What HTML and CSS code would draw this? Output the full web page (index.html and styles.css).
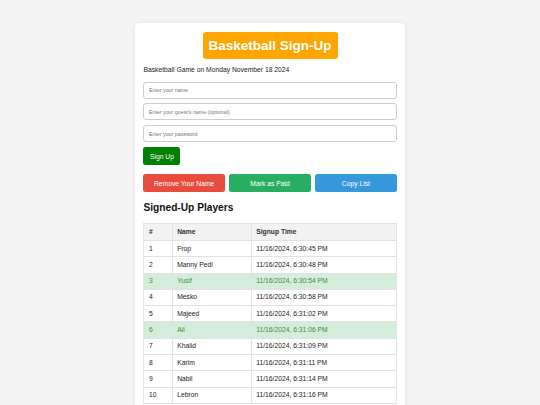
FILE: index.html
```html
<!DOCTYPE html>
<html lang="en">
<head>
<meta charset="utf-8">
<title>Basketball Sign-Up</title>
<link rel="stylesheet" href="styles.css">
</head>
<body>
<div class="card">
  <div class="title-wrap"><h1 class="title">Basketball Sign-Up</h1></div>
  <p class="subtitle">Basketball Game on Monday November 18 2024</p>
  <form class="form">
    <input class="field" type="text" placeholder="Enter your name">
    <input class="field" type="text" placeholder="Enter your guest's name (optional)">
    <input class="field" type="password" placeholder="Enter your password">
    <button type="button" class="btn btn-signup">Sign Up</button>
  </form>
  <div class="actions">
    <button type="button" class="btn btn-red">Remove Your Name</button>
    <button type="button" class="btn btn-green">Mark as Paid</button>
    <button type="button" class="btn btn-blue">Copy List</button>
  </div>
  <h2 class="heading">Signed-Up Players</h2>
  <table class="players">
    <thead>
      <tr><th class="c-num">#</th><th class="c-name">Name</th><th>Signup Time</th></tr>
    </thead>
    <tbody>
      <tr><td>1</td><td>Frop</td><td>11/16/2024, 6:30:45 PM</td></tr>
      <tr><td>2</td><td>Manny Pedi</td><td>11/16/2024, 6:30:48 PM</td></tr>
      <tr class="paid"><td>3</td><td>Yusif</td><td>11/16/2024, 6:30:54 PM</td></tr>
      <tr><td>4</td><td>Mesko</td><td>11/16/2024, 6:30:58 PM</td></tr>
      <tr><td>5</td><td>Majeed</td><td>11/16/2024, 6:31:02 PM</td></tr>
      <tr class="paid"><td>6</td><td>Ali</td><td>11/16/2024, 6:31:06 PM</td></tr>
      <tr><td>7</td><td>Khalid</td><td>11/16/2024, 6:31:09 PM</td></tr>
      <tr><td>8</td><td>Karim</td><td>11/16/2024, 6:31:11 PM</td></tr>
      <tr><td>9</td><td>Nabil</td><td>11/16/2024, 6:31:14 PM</td></tr>
      <tr><td>10</td><td>Lebron</td><td>11/16/2024, 6:31:16 PM</td></tr>
    </tbody>
  </table>
</div>
</body>
</html>
```
FILE: styles.css
```css
* { box-sizing: border-box; }
html, body { margin: 0; padding: 0; }
body {
  background: #f4f4f4;
  font-family: "Liberation Sans", Arial, sans-serif;
  color: #222;
  padding-top: 22.5px;
}
.card {
  width: 270px;
  margin: 0 auto;
  background: #fff;
  border-radius: 4.5px;
  box-shadow: 0 0 6px rgba(0,0,0,0.08);
  padding: 9.5px 8.4px 12px;
}
.title-wrap { display: flex; justify-content: center; }
.title {
  margin: 0;
  background: #ffa500;
  color: #fff;
  font-size: 13.5px;
  font-weight: bold;
  line-height: 27px;
  height: 27px;
  width: 135px;
  text-align: center;
  border-radius: 3px;
}
.subtitle {
  margin: 7px 0 0;
  font-size: 6.75px;
  line-height: 8px;
  color: #222;
}
.form {
  display: flex;
  flex-direction: column;
  align-items: flex-start;
  gap: 4.8px;
  margin-top: 7.5px;
}
.field {
  width: 100%;
  height: 17px;
  border: 0.6px solid #ccc;
  border-radius: 3px;
  padding: 0 4.5px;
  font-family: "Liberation Sans", Arial, sans-serif;
  font-size: 5.3px;
  color: #333;
  background: #fff;
  outline: none;
}
.field::placeholder { color: #757575; }
.btn {
  border: none;
  color: #fff;
  font-family: "Liberation Sans", Arial, sans-serif;
  font-size: 6.75px;
  border-radius: 2.5px;
  cursor: pointer;
  padding: 0;
}
.btn-signup {
  background: #008000;
  width: 37px;
  height: 17.7px;
  margin-top: 0.5px;
}
.actions {
  display: flex;
  gap: 4.5px;
  margin-top: 9.3px;
}
.actions .btn { flex: 1; height: 17.4px; }
.btn-red { background: #e74c3c; }
.btn-green { background: #27ae60; }
.btn-blue { background: #3498db; }
.heading {
  margin: 10px 0 0;
  font-size: 10.2px;
  line-height: 12px;
  font-weight: bold;
  color: #111;
}
.players {
  margin-top: 9.5px;
  width: 100%;
  border-collapse: collapse;
  font-size: 6.75px;
  table-layout: fixed;
}
.players th, .players td {
  border: 0.6px solid #e2e2e2;
  text-align: left;
  padding: 0 4.5px;
  height: 16.3px;
  line-height: 8px;
  color: #222;
}
.players th {
  background: #f2f2f2;
  font-weight: bold;
  height: 16.7px;
  color: #333;
}
.c-num { width: 28.3px; }
.c-name { width: 79px; }
.players tbody tr { background: #fff; }
.players tr.paid { background: #d4edda; }
.players tr.paid td { color: #3c8a4a; }
```
